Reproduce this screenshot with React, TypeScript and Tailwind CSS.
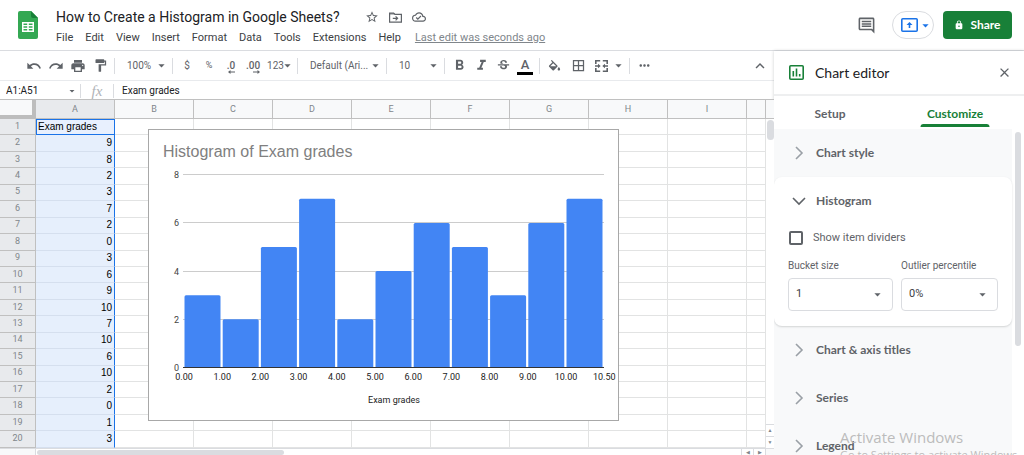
import React from 'react'
import {
  MdArrowDropDown,
  MdBorderAll,
  MdClose,
  MdExpandLess,
  MdFormatBold,
  MdFormatItalic,
  MdFormatPaint,
  MdLock,
  MdMoreHoriz,
  MdOutlineCloudDone,
  MdOutlineInsertComment,
  MdPrint,
  MdRedo,
  MdStarBorder,
  MdStrikethroughS,
  MdUndo,
} from 'react-icons/md'

const MENUS = ['File', 'Edit', 'View', 'Insert', 'Format', 'Data', 'Tools', 'Extensions', 'Help']
const COLUMNS = ['A', 'B', 'C', 'D', 'E', 'F', 'G', 'H', 'I', '']
const ROWS = ['Exam grades', '9', '8', '2', '3', '7', '2', '0', '3', '6', '9', '10', '7', '10', '6', '10', '2', '0', '1', '3']

const BARS = [3, 2, 5, 7, 2, 4, 6, 5, 3, 6, 7]
const X_TICKS = ['0.00', '1.00', '2.00', '3.00', '4.00', '5.00', '6.00', '7.00', '8.00', '9.00', '10.00', '10.50']
const Y_TICKS = [0, 2, 4, 6, 8]

export default function App() {
  return (
    <div className="flex h-screen flex-col overflow-hidden bg-white font-['Roboto',sans-serif] text-[#3c4043]">
      <Header />
      <div className="flex min-h-0 flex-1">
        <main className="flex min-w-0 flex-1 flex-col">
          <Toolbar />
          <FormulaBar />
          <Sheet />
        </main>
        <ChartEditor />
      </div>
      <div className="pointer-events-none absolute left-[840px] top-[427px] font-['Open_Sans',sans-serif] whitespace-nowrap text-[#bcbcbc]">
        <p className="text-[15px] leading-5">Activate Windows</p>
        <p className="text-[11px] leading-4">Go to Settings to activate Windows.</p>
      </div>
    </div>
  )
}

const Header: React.FC = () => (
  <header className="flex h-[51px] shrink-0 items-center border-b border-[#dadce0] pr-3 pl-[18px]">
    <SheetsLogo />
    <div className="ml-[18px] flex flex-1 flex-col">
      <div className="flex h-6 items-center text-[#5f6368]">
        <input
          aria-label="Document name"
          defaultValue="How to Create a Histogram in Google Sheets?"
          className="w-[309px] bg-transparent text-[14px] leading-5 text-[#202124] outline-none"
        />
        <button aria-label="Star"><MdStarBorder size={14} /></button>
        <button aria-label="Move" className="ml-[10px]"><FolderMoveIcon /></button>
        <button aria-label="Document status" className="ml-[10px]"><MdOutlineCloudDone size={14} /></button>
      </div>
      <nav className="flex h-4 items-center gap-3 pt-px text-[11px] leading-4">
        {MENUS.map((m) => (
          <button key={m}>{m}</button>
        ))}
        <a href="#history" className="ml-[2px] text-[#80868b] underline">Last edit was seconds ago</a>
      </nav>
    </div>
    <button aria-label="Open comment history" className="text-[#5f6368]">
      <MdOutlineInsertComment size={19} />
    </button>
    <button
      aria-label="Present"
      className="ml-4 flex h-7 w-[42px] items-center justify-center rounded-full border border-[#dadce0] pl-1 text-[#1a73e8]"
    >
      <PresentIcon />
      <MdArrowDropDown size={15} className="-mr-1" />
    </button>
    <button className="ml-[9px] flex h-7 w-[69px] items-center justify-center gap-[6px] rounded bg-[#188038] font-['Lato',sans-serif] text-[12px] font-bold text-white">
      <MdLock size={10} />
      Share
    </button>
  </header>
)

const Toolbar: React.FC = () => (
  <div className="flex h-[30px] shrink-0 items-center border-b border-[#e8eaed] pr-[5px] pl-[23px] text-[#5f6368]">
    <Tool label="Undo"><MdUndo size={16} /></Tool>
    <Tool label="Redo"><MdRedo size={16} /></Tool>
    <Tool label="Print"><MdPrint size={16} /></Tool>
    <Tool label="Paint format"><MdFormatPaint size={15} /></Tool>
    <Separator />
    <ToolSelect label="Zoom" value="100%" className="w-[51px]" />
    <Separator />
    <Tool label="Format as currency"><span className="text-[10px]">$</span></Tool>
    <Tool label="Format as percent"><span className="text-[9px]">%</span></Tool>
    <Tool label="Decrease decimal places"><DecimalIcon text=".0" left /></Tool>
    <Tool label="Increase decimal places"><DecimalIcon text=".00" /></Tool>
    <button aria-label="More formats" className="flex w-[30px] items-center justify-center text-[10px]">
      123<MdArrowDropDown size={15} className="-mx-1 shrink-0" />
    </button>
    <Separator />
    <ToolSelect label="Font" value="Default (Ari..." className="w-[82px]" />
    <Separator />
    <ToolSelect label="Font size" value="10" className="w-[51px]" />
    <Separator />
    <Tool label="Bold"><MdFormatBold size={17} /></Tool>
    <Tool label="Italic"><MdFormatItalic size={17} /></Tool>
    <Tool label="Strikethrough"><MdStrikethroughS size={15} /></Tool>
    <Tool label="Text color">
      <span className="w-4 border-b-[3px] border-black text-[13px] leading-[15px] font-medium">A</span>
    </Tool>
    <Separator />
    <Tool label="Fill color"><BucketIcon /></Tool>
    <button aria-label="Borders" className="flex w-[26px] justify-center"><MdBorderAll size={15} /></button>
    <button aria-label="Merge cells" className="flex w-[35px] items-center justify-end gap-[3px]">
      <MergeIcon />
      <MdArrowDropDown size={15} />
    </button>
    <Separator />
    <Tool label="More"><MdMoreHoriz size={15} /></Tool>
    <button aria-label="Hide the menus" className="ml-auto"><MdExpandLess size={18} /></button>
  </div>
)

const Tool: React.FC<{ label: string, children: React.ReactNode }> = ({ label, children }) => (
  <button aria-label={label} className="flex h-6 w-[22px] shrink-0 items-center justify-center">
    {children}
  </button>
)

const Separator: React.FC = () => <div className="mx-[3px] h-4 w-px shrink-0 bg-[#dadce0]" />

const ToolSelect: React.FC<{ label: string, value: string, className: string }> = ({ label, value, className }) => (
  <div className={`relative flex shrink-0 items-center ${className}`}>
    <select aria-label={label} className="w-full appearance-none bg-transparent pl-[9px] text-[10px] leading-4 outline-none">
      <option>{value}</option>
    </select>
    <MdArrowDropDown size={15} className="pointer-events-none absolute right-0" />
  </div>
)

const FormulaBar: React.FC = () => (
  <div className="flex h-[18px] shrink-0 items-center pt-px text-[10px]">
    <input aria-label="Name box" defaultValue="A1:A51" className="w-[66px] bg-transparent pl-[6px] text-[#202124] outline-none" />
    <MdArrowDropDown size={12} className="text-[#5f6368]" />
    <div className="ml-[2px] h-[14px] w-px bg-[#dadce0]" />
    <label htmlFor="formula" className="w-8 text-center font-['Liberation_Serif',serif] text-[15px] leading-4 text-[#b0b3b7] italic">
      fx
    </label>
    <div className="h-[14px] w-px bg-[#dadce0]" />
    <input id="formula" defaultValue="Exam grades" className="min-w-0 flex-1 bg-transparent pl-2 text-[#202124] outline-none" />
  </div>
)

const Sheet: React.FC = () => (
  <div className="relative flex min-h-0 flex-1 flex-col border-t border-[#c0c0c0]">
    <div className="flex min-h-0 flex-1">
      <div className="min-w-0 flex-1">
        <table className="h-full w-full table-fixed border-separate border-spacing-0">
          <colgroup>
            <col className="w-9" />
            {COLUMNS.map((c, i) => (
              <col key={i} className={c ? 'w-[79px]' : ''} />
            ))}
          </colgroup>
          <thead>
            <tr className="h-[19px] bg-[#f8f9fa] text-[9px] leading-3 text-[#80868b]">
              <th className="border-r-4 border-b-4 border-[#bdbdbd]" />
              {COLUMNS.map((c, i) => (
                <th
                  key={i}
                  className={`border-r border-b border-[#c0c0c0] p-0 font-normal ${c === 'A' ? 'bg-[#e8eaed]' : ''}`}
                >
                  {c}
                </th>
              ))}
            </tr>
          </thead>
          <tbody>
            {ROWS.map((value, row) => (
              <tr key={row}>
                <th className="border-r border-b border-[#c0c0c0] bg-[#e8eaed] p-0 pb-[2px] text-[9px] leading-3 font-normal text-[#80868b]">
                  {row + 1}
                </th>
                <td
                  className={`p-0 font-['Liberation_Sans',sans-serif] text-[10px] leading-3 text-black ${
                    row === 0
                      ? 'border border-[#1a73e8] bg-[#e8f0fe] pl-px text-left'
                      : 'border-r border-b border-r-[#1a73e8] border-b-[#d5dfee] bg-[#e6effc] pr-[2px] text-right'
                  }`}
                >
                  {value}
                </td>
                {COLUMNS.slice(1).map((_, i) => (
                  <td key={i} className="border-r border-b border-[#e2e3e3] p-0" />
                ))}
              </tr>
            ))}
          </tbody>
        </table>
      </div>
      {/* vertical scrollbar */}
      <div className="flex w-2 flex-col bg-white">
        <div className="h-[19px] border-b border-[#c0c0c0] bg-[#f8f9fa]" />
        <div className="mt-px ml-px h-5 w-[7px] rounded bg-[#dadce0]" />
        <div className="mt-auto flex h-6 flex-col border-t border-[#dadce0] text-[#80868b]">
          <button aria-label="Scroll up" className="flex h-3 items-center justify-center border-b border-[#dadce0] text-[5px]">▲</button>
          <button aria-label="Scroll down" className="flex h-3 items-center justify-center text-[5px]">▼</button>
        </div>
      </div>
    </div>
    {/* horizontal scrollbar */}
    <div className="flex h-[7px] shrink-0 border-t border-[#dadce0]">
      <div className="w-9 border-r border-[#dadce0] bg-[#f8f9fa]" />
      <div className="mt-px ml-px h-[5px] w-[247px] rounded bg-[#dadce0]" />
      <div className="ml-auto flex text-[5px] leading-[6px] text-[#80868b]">
        <button aria-label="Scroll left" className="w-3 border-l border-[#dadce0]">◀</button>
        <button aria-label="Scroll right" className="w-3 border-l border-[#dadce0]">▶</button>
        <div className="w-[9px] border-l border-[#dadce0] bg-[#f8f9fa]" />
      </div>
    </div>
    <div className="absolute top-[29px] left-[148px] border border-[#a8a8a8] bg-white">
      <Histogram />
    </div>
  </div>
)

const Histogram: React.FC = () => {
  const left = 35
  const base = 237
  const unit = 24.1
  const step = 38.2
  return (
    <svg width="469" height="290" viewBox="0 0 469 290" className="block font-['Roboto',sans-serif]">
      <text x="14" y="27" fontSize="16" fill="#808080" className="font-['Liberation_Sans',sans-serif]">Histogram of Exam grades</text>
      {Y_TICKS.map((t) => (
        <g key={t}>
          <rect x={left - 1} y={Math.round(base - t * unit)} width="421" height="1" fill="#cccccc" />
          <text x="30" y={Math.round(base - t * unit) + 4} fontSize="9" textAnchor="end" fill="#444444">{t}</text>
        </g>
      ))}
      {BARS.map((v, i) => {
        const x = left + i * step
        const y = base - v * unit
        return (
          <path
            key={i}
            d={`M${x + 0.5} ${base}V${y + 2}q0-1.5 1.5-1.5h33q1.5 0 1.5 1.5V${base}z`}
            fill="#4285f4"
          />
        )
      })}
      <rect x={left - 1} y={base} width="421" height="1" fill="#333333" />
      {X_TICKS.map((t, i) => (
        <text key={t} x={left + i * step} y="250" fontSize="9" textAnchor="middle" fill="#222222">{t}</text>
      ))}
      <text x="245" y="273" fontSize="9" textAnchor="middle" fill="#222222">Exam grades</text>
    </svg>
  )
}

const ChartEditor: React.FC = () => (
  <aside className="flex w-[250px] shrink-0 flex-col bg-white font-['Lato',sans-serif] shadow-[0_0_3px_rgba(60,64,67,0.25)]">
    <div className="flex h-[45px] shrink-0 items-center border-b-2 border-[#eeeff0] pr-3 pl-[15px]">
      <ChartIcon />
      <h2 className="ml-[11px] flex-1 text-[14px] text-[#202124]">Chart editor</h2>
      <button aria-label="Close" className="text-[#5f6368]"><MdClose size={15} /></button>
    </div>
    <div className="flex h-[33px] shrink-0 text-[12px] font-bold text-[#5f6368]" role="tablist">
      <button role="tab" aria-selected="false" className="h-[31px] w-28 pt-1">Setup</button>
      <button role="tab" aria-selected="true" className="relative h-[31px] flex-1 pt-1 text-[#188038]">
        Customize
        <span className="absolute bottom-0 left-1/2 h-[3px] w-[69px] -translate-x-1/2 rounded-t bg-[#188038]" />
      </button>
    </div>
    <div className="flex min-h-0 flex-1 overflow-hidden">
      <div className="flex-1 bg-[#f8f9fa]">
        <Section title="Chart style" />
        <section className="h-[149px] rounded-lg bg-white shadow-[0_1px_2px_rgba(60,64,67,0.2)]">
          <Section title="Histogram" open />
          <label className="flex items-center gap-[10px] px-[15px] pt-[5px] font-['Roboto',sans-serif] text-[11px] leading-4 text-[#5f6368]">
            <input type="checkbox" className="size-[14px] appearance-none rounded-xs border-2 border-[#5f6368]" />
            Show item dividers
          </label>
          <div className="flex gap-2 px-[14px] pt-3 font-['Roboto',sans-serif]">
            <Field id="bucket" label="Bucket size" value="1" className="w-[105px]" />
            <Field id="outlier" label="Outlier percentile" value="0%" className="w-[97px]" />
          </div>
        </section>
        <Section title="Chart & axis titles" />
        <Section title="Series" />
        <Section title="Legend" />
      </div>
      <div className="w-3 pt-[3px] pl-[3px]">
        <div className="h-[214px] w-[6px] rounded-full bg-[#dadce0]" />
      </div>
    </div>
  </aside>
)

const Section: React.FC<{ title: string, open?: boolean }> = ({ title, open }) => (
  <button className="flex h-12 w-full items-center pb-px pl-[18px] text-left">
    <svg width="14" height="14" viewBox="0 0 14 14" fill="none" strokeWidth="1.6" stroke={open ? '#5f6368' : '#9aa0a6'}>
      <path d={open ? 'M1 4l6 6 6-6' : 'M4 1l6 6-6 6'} />
    </svg>
    <span className="ml-[10px] text-[12px] leading-4 font-bold text-[#5f6368]">{title}</span>
  </button>
)

const Field: React.FC<{ id: string, label: string, value: string, className: string }> = ({ id, label, value, className }) => (
  <div className={className}>
    <label htmlFor={id} className="block text-[10px] leading-4 whitespace-nowrap text-[#5f6368]">{label}</label>
    <div className="relative mt-1 flex items-center">
      <select id={id} className="h-[33px] w-full appearance-none rounded border border-[#dadce0] bg-white pl-[7px] text-[11px] text-[#3c4043]">
        <option>{value}</option>
      </select>
      <MdArrowDropDown size={15} className="pointer-events-none absolute right-2 text-[#5f6368]" />
    </div>
  </div>
)

const SheetsLogo: React.FC = () => (
  <svg width="20" height="28" viewBox="0 0 20 28" className="shrink-0">
    <path d="M2 0h11l7 7v19a2 2 0 0 1-2 2H2a2 2 0 0 1-2-2V2a2 2 0 0 1 2-2z" fill="#34a853" />
    <path d="M13 0l7 7h-5a2 2 0 0 1-2-2z" fill="#188038" />
    <path d="M4 11h12v10H4zM5.5 12.5v1.6h3.7v-1.6zm5.3 0v1.6h3.7v-1.6zM5.5 15.3v1.4h3.7v-1.4zm5.3 0v1.4h3.7v-1.4zM5.5 18v1.5h3.7V18zm5.3 0v1.5h3.7V18z" fill="#fff" fillRule="evenodd" />
  </svg>
)

const FolderMoveIcon: React.FC = () => (
  <svg width="13" height="11" viewBox="0 0 13 11" fill="none" stroke="currentColor" strokeWidth="1.2">
    <path d="M.6 10.2V1h4l1.3 1.4h6.5v7.8z" />
    <path d="M.6 1.8h5" />
    <path d="M3.8 6.3h4.8M6.6 4.3l2 2-2 2" />
  </svg>
)

const ChartIcon: React.FC = () => (
  <svg width="15" height="15" viewBox="0 0 15 15" fill="none" stroke="#188038" strokeWidth="1.6">
    <rect x="0.8" y="0.8" width="13.4" height="13.4" rx="1" />
    <path d="M4.3 6v5.5M7.5 3.5v8M10.7 9v2.5" />
  </svg>
)

const BucketIcon: React.FC = () => (
  <svg width="15" height="15" viewBox="0 -3 24 24" fill="currentColor">
    <path d="M16.56 8.94L7.62 0 6.21 1.41l2.38 2.38-5.15 5.15c-.59.59-.59 1.54 0 2.12l5.5 5.5c.29.29.68.44 1.06.44s.77-.15 1.06-.44l5.5-5.5c.59-.58.59-1.53 0-2.12zM5.21 10L10 5.21 14.79 10H5.21zM19 11.5s-2 2.17-2 3.5c0 1.1.9 2 2 2s2-.9 2-2c0-1.33-2-3.5-2-3.5z" />
  </svg>
)

const PresentIcon: React.FC = () => (
  <svg width="17" height="14" viewBox="0 0 17 14" fill="none" stroke="currentColor" strokeWidth="1.6" className="shrink-0">
    <rect x="0.8" y="0.8" width="15.4" height="12.4" rx="1" />
    <path d="M8.5 10V6" />
    <path d="M5.5 7L8.5 4l3 3z" fill="currentColor" stroke="none" />
  </svg>
)

const DecimalIcon: React.FC<{ text: string, left?: boolean }> = ({ text, left }) => (
  <span className="flex flex-col items-end pt-1 text-[10px] leading-[9px] font-medium">
    {text}
    <svg width="7" height="4" viewBox="0 0 7 4" fill="currentColor">
      <path d={left ? 'M0 2l2.5-2v1.5H7v1H2.5V4z' : 'M7 2L4.5 0v1.5H0v1h4.5V4z'} />
    </svg>
  </span>
)

const MergeIcon: React.FC = () => (
  <svg width="13" height="12" viewBox="0 0 13 12" fill="none" stroke="currentColor" strokeWidth="1.6" className="shrink-0">
    <path d="M.8 4V.8h4.4M7.8.8h4.4V4M12.2 8v3.2H7.8M5.2 11.2H.8V8" />
    <path d="M0 6h4M13 6H9" strokeWidth="1.4" />
    <path d="M3 3.8L5.7 6 3 8.2zM10 3.8L7.3 6 10 8.2z" fill="currentColor" stroke="none" />
  </svg>
)
